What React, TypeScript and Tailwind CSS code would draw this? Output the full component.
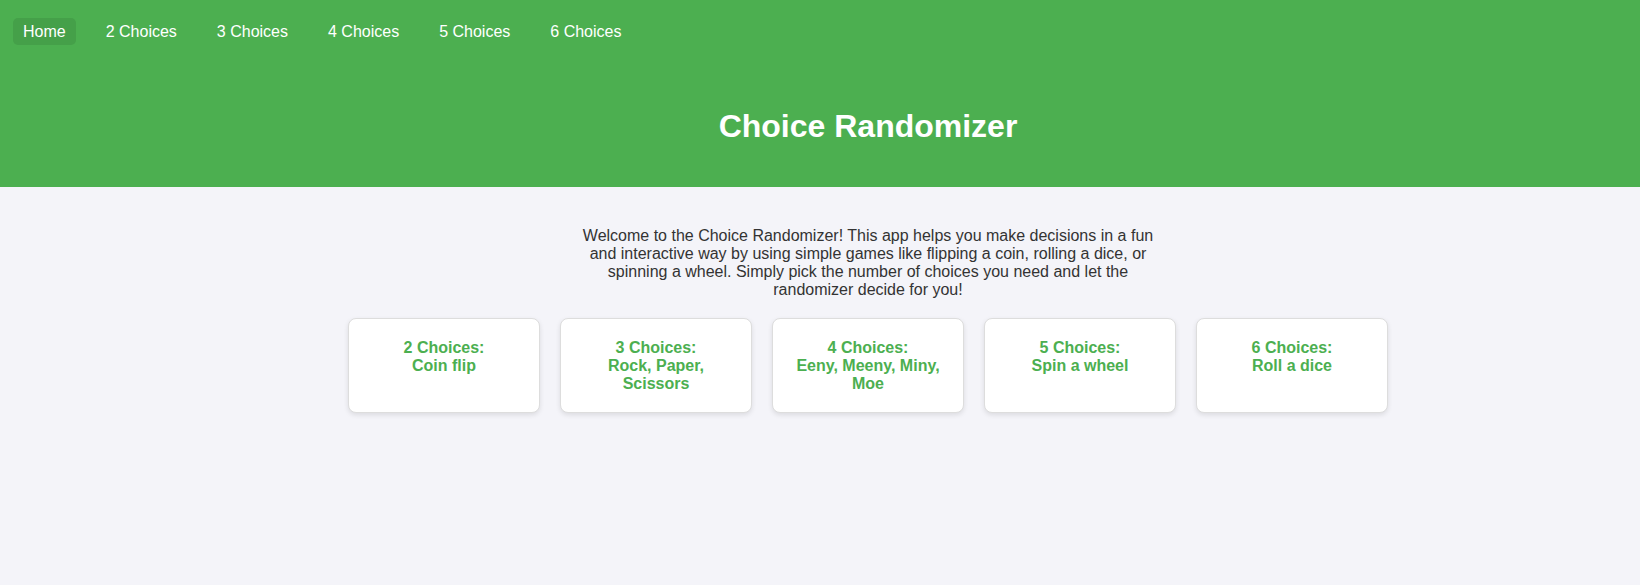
const navLinks = ["Home", "2 Choices", "3 Choices", "4 Choices", "5 Choices", "6 Choices"];

const games = [
  { label: "2 Choices:", name: "Coin flip" },
  { label: "3 Choices:", name: "Rock, Paper, Scissors" },
  { label: "4 Choices:", name: "Eeny, Meeny, Miny, Moe" },
  { label: "5 Choices:", name: "Spin a wheel" },
  { label: "6 Choices:", name: "Roll a dice" },
];

const App = () => {
  return (
    <div className="min-h-[585px] bg-[#f4f4f9] font-['Liberation_Sans',Arial,sans-serif] text-[#333]">
      <header className="h-[187px] bg-[#4caf50] text-white">
        <nav className="flex gap-[20px] pl-[13px] pt-[18px]">
          {navLinks.map((link, i) => (
            <a
              key={link}
              href="#"
              className={`rounded-[5px] px-[10px] py-[4.5px] text-[16px] leading-[18px] text-white ${
                i === 0 ? "bg-[#45a049]" : ""
              }`}
            >
              {link}
            </a>
          ))}
        </nav>
        <h1 className="ml-[96px] mt-[63px] text-center text-[32px] font-bold leading-[37px]">
          Choice Randomizer
        </h1>
      </header>

      <main className="ml-[96px] flex flex-col items-center pt-[40px]">
        <p className="max-w-[600px] text-center text-[16px] leading-[18px]">
          Welcome to the Choice Randomizer! This app helps you make decisions in a fun and
          interactive way by using simple games like flipping a coin, rolling a dice, or spinning a
          wheel. Simply pick the number of choices you need and let the randomizer decide for you!
        </p>

        <div className="mt-[19px] flex gap-[20px]">
          {games.map((g) => (
            <a
              key={g.label}
              href="#"
              className="w-[192px] rounded-[8px] border border-[#ddd] bg-white px-5 pt-[20px] pb-[19px] text-center text-[16px] font-bold leading-[18px] text-[#4caf50] shadow-[0_2px_5px_rgba(0,0,0,0.1)]"
            >
              {g.label}
              <br />
              {g.name}
            </a>
          ))}
        </div>
      </main>
    </div>
  );
};

export default App;
